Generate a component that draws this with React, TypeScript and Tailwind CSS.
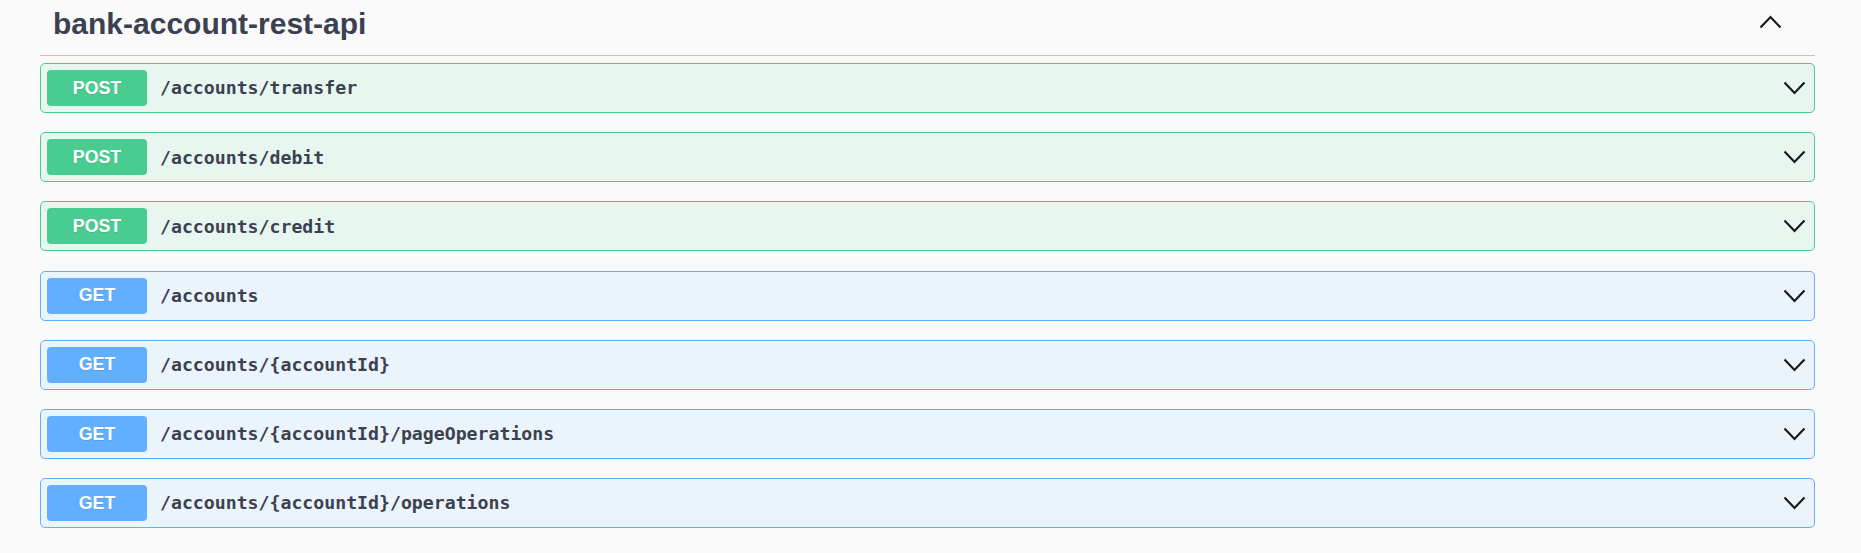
import React from "react";

interface Endpoint {
  method: "POST" | "GET";
  path: string;
}

const endpoints: Endpoint[] = [
  { method: "POST", path: "/accounts/transfer" },
  { method: "POST", path: "/accounts/debit" },
  { method: "POST", path: "/accounts/credit" },
  { method: "GET", path: "/accounts" },
  { method: "GET", path: "/accounts/{accountId}" },
  { method: "GET", path: "/accounts/{accountId}/pageOperations" },
  { method: "GET", path: "/accounts/{accountId}/operations" },
];

const Chevron: React.FC<{ up?: boolean }> = ({ up }) => (
  <svg width="23" height="14" viewBox="0 0 23 14" fill="none">
    <polyline
      points={up ? "1.5,12.5 11.5,2 21.5,12.5" : "1.5,1.5 11.5,12 21.5,1.5"}
      stroke="#1a1a1a"
      strokeWidth="2.2"
      strokeLinejoin="miter"
    />
  </svg>
);

const OperationRow: React.FC<Endpoint> = ({ method, path }) => {
  const isPost = method === "POST";
  return (
    <div
      className={
        isPost
          ? "mb-[19.2px] flex h-[50px] items-center rounded-[5px] border border-[#49cc90] bg-[#e8f6f0] pl-[6px] pr-[8px]"
          : "mb-[19.2px] flex h-[50px] items-center rounded-[5px] border border-[#61affe] bg-[#ebf3fb] pl-[6px] pr-[8px]"
      }
    >
      <span
        className={
          isPost
            ? "flex h-[36px] w-[100px] items-center justify-center rounded-[4px] bg-[#49cc90] text-[17.8px] font-bold text-white [text-shadow:0_1px_0_rgba(0,0,0,0.1)]"
            : "flex h-[36px] w-[100px] items-center justify-center rounded-[4px] bg-[#61affe] text-[17.8px] font-bold text-white [text-shadow:0_1px_0_rgba(0,0,0,0.1)]"
        }
        style={{ fontFamily: '"Liberation Sans", Arial, sans-serif' }}
      >
        {method}
      </span>
      <span
        className="flex-1 pl-[13px] text-[18.2px] font-semibold text-[#3b4151]"
        style={{ fontFamily: '"DejaVu Sans Mono", monospace' }}
      >
        {path}
      </span>
      <Chevron />
    </div>
  );
};

const App: React.FC = () => {
  return (
    <div
      className="min-h-[553px] bg-[#fafafa] pl-[40px] pr-[46px]"
      style={{ fontFamily: '"Liberation Sans", Arial, sans-serif' }}
    >
      <div className="mb-[7px] flex items-start justify-between border-b border-[#c1c3c7] pb-[14px] pl-[13px] pr-[33px] pt-[7px]">
        <h3 className="text-[30px] font-bold leading-[34px] text-[#3b4151]">
          bank-account-rest-api
        </h3>
        <div className="mt-[8px]">
          <Chevron up />
        </div>
      </div>
      {endpoints.map((ep) => (
        <OperationRow key={ep.path} {...ep} />
      ))}
    </div>
  );
};

export default App;
